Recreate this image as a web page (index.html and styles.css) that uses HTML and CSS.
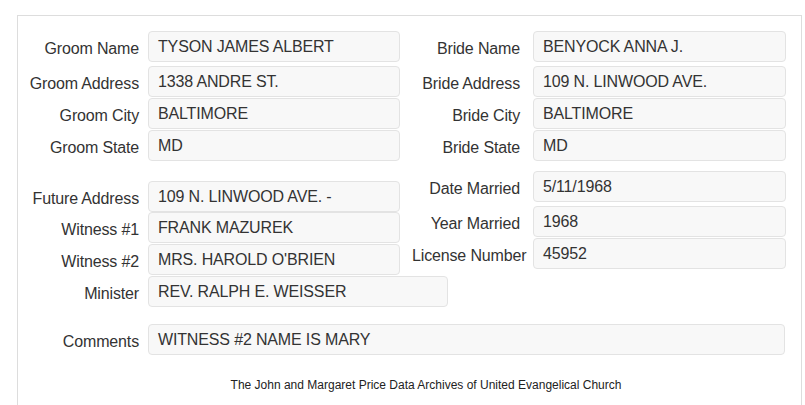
FILE: index.html
```html
<!DOCTYPE html>
<html lang="en">

<head>
    <meta charset="UTF-8">
    <meta name="viewport" content="width=device-width, initial-scale=1.0">
    <title>Marriage Record</title>
    <link rel="stylesheet" href="styles.css">
</head>

<body>
    <div class="panel">
        <div class="section first">
            <div class="col left">
                <div class="row gap4"><label>Groom Name</label><div class="field">TYSON JAMES ALBERT</div></div>
                <div class="row gap1"><label>Groom Address</label><div class="field">1338 ANDRE ST.</div></div>
                <div class="row gap1"><label>Groom City</label><div class="field">BALTIMORE</div></div>
                <div class="row"><label>Groom State</label><div class="field">MD</div></div>
            </div>
            <div class="col right">
                <div class="row gap4"><label>Bride Name</label><div class="field">BENYOCK ANNA J.</div></div>
                <div class="row gap1"><label>Bride Address</label><div class="field">109 N. LINWOOD AVE.</div></div>
                <div class="row gap1"><label>Bride City</label><div class="field">BALTIMORE</div></div>
                <div class="row"><label>Bride State</label><div class="field">MD</div></div>
            </div>
        </div>

        <div class="section second">
            <div class="col left lower">
                <div class="row"><label>Future Address</label><div class="field">109 N. LINWOOD AVE. -</div></div>
                <div class="row gap1"><label>Witness #1</label><div class="field">FRANK MAZUREK</div></div>
                <div class="row"><label>Witness #2</label><div class="field">MRS. HAROLD O'BRIEN</div></div>
            </div>
            <div class="col right">
                <div class="row gap4"><label>Date Married</label><div class="field">5/11/1968</div></div>
                <div class="row gap1"><label>Year Married</label><div class="field">1968</div></div>
                <div class="row"><label>License Number</label><div class="field">45952</div></div>
            </div>
        </div>

        <div class="row single minister"><label>Minister</label><div class="field wide">REV. RALPH E. WEISSER</div></div>

        <div class="row single comments"><label>Comments</label><div class="field full">WITNESS #2 NAME IS MARY</div></div>

        <p class="footer">The John and Margaret Price Data Archives of United Evangelical Church</p>
    </div>
</body>

</html>
```

FILE: styles.css
```css
* {
    padding: 0;
    margin: 0;
    box-sizing: border-box;
    font-family: "Liberation Sans", Arial, sans-serif;
}

body {
    background-color: #fff;
    color: #333;
}

.panel {
    margin: 15px 0 0 17px;
    width: 785px;
    height: 400px;
    border: 1px solid #ddd;
    border-bottom: none;
    padding-top: 15px;
}

.section {
    display: flex;
    align-items: flex-start;
}

.second {
    margin-top: 10px;
}

.col {
    display: flex;
    flex-direction: column;
}

.left {
    width: 382px;
}

.lower {
    padding-top: 10px;
}

.right {
    padding-left: 12px;
}

.row {
    display: flex;
    align-items: flex-start;
}

.gap4 {
    margin-bottom: 4px;
}

.gap1 {
    margin-bottom: 1px;
}

label {
    font-size: 16px;
    line-height: 18px;
    padding-top: 9px;
    text-align: right;
    white-space: nowrap;
    letter-spacing: -0.15px;
    flex: none;
}

.left label,
.single label {
    width: 121px;
    margin-right: 9px;
}

.right label {
    width: 108px;
    margin-right: 13px;
}

.field {
    flex: none;
    width: 252px;
    height: 31px;
    padding: 6px 9px 4px;
    font-size: 16px;
    line-height: 18px;
    letter-spacing: -0.15px;
    color: #333;
    background-color: #f8f8f8;
    border: 1px solid #e3e3e3;
    border-radius: 4px;
    white-space: nowrap;
}

.right .field {
    width: 253px;
}

.minister {
    margin-top: 1px;
}

.field.wide {
    width: 300px;
}

.comments {
    margin-top: 17px;
}

.field.full {
    width: 637px;
}

.footer {
    margin-top: 22px;
    padding-left: 33px;
    text-align: center;
    font-size: 12px;
    line-height: 17px;
    color: #222;
}
```
